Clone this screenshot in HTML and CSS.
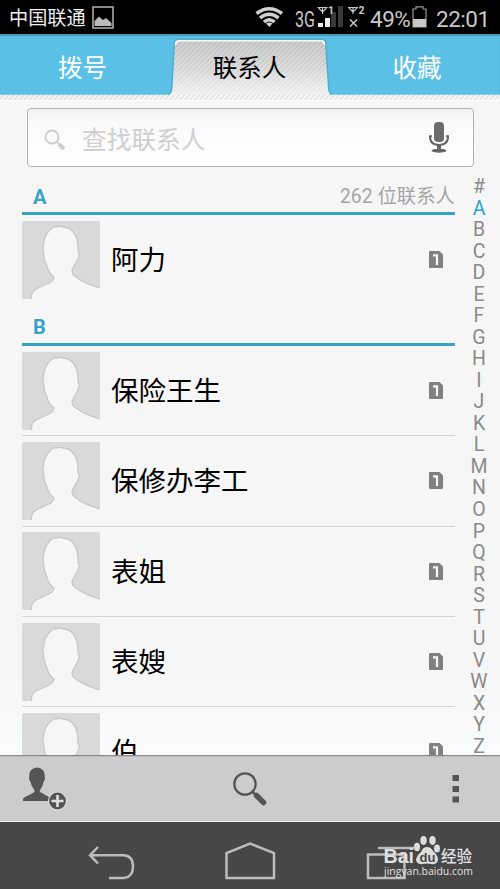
FILE: index.html
```html
<!DOCTYPE html>
<html lang="zh-CN">
<head>
<meta charset="utf-8">
<title>联系人</title>
<link rel="stylesheet" href="styles.css">
</head>
<body>
<svg class="defs" aria-hidden="true">
  <symbol id="person" viewBox="0 0 78 78">
    <rect width="78" height="78" rx="1.500" fill="#d9d9d9"/>
    <path d="M9.500 80V74Q10.500 70 14 68L27 62Q31.500 60 32 56Q26 51 25 45Q21.500 38 21.500 30Q20.500 27 21.500 24Q22 16 26 11Q29 7 33 5.500L34 6.500L36 5L44 6.500Q48 7 51 11Q56 16 56 28V31L57.500 32L56 38Q53 43 50 49Q50 54 54 56Q63 63 80 67.500V80Z" fill="#f6f6f6" stroke="#c8c8c8" stroke-width="1.300"/>
    <path d="M10.200 78H78V67.600" fill="none" stroke="#f6f6f6" stroke-width="1.500"/>
  </symbol>
  <symbol id="sim" viewBox="0 0 14 17">
    <path d="M1 0H10.500L14 3.500V16Q14 17 13 17H1Q0 17 0 16V1Q0 0 1 0Z" fill="#808080"/>
    <path d="M4 4.300H8V14" fill="none" stroke="#f6f6f6" stroke-width="2.200"/>
  </symbol>
</svg>
<div class="phone">
  <header class="status">
    <span class="carrier">中国联通</span>
    <svg class="photo" width="22" height="23" viewBox="0 0 22 23"><rect x="1" y="1" width="20" height="21" fill="none" stroke="#aaa" stroke-width="1.600"/><path d="M2.500 20V15L7 10.500L11 14L14 12L19.500 17V20Z" fill="#bbb"/></svg>
    <svg class="signals" width="114" height="34" viewBox="0 0 114 34">
      <g fill="none" stroke="#d0d0d0" stroke-width="3.500"><path d="M1.500 13.500Q14.300 4 27 13.500"/><path d="M5 18Q14.300 10.500 23.500 18"/><path d="M9 22Q14.300 17.500 19.500 22"/></g><path d="M11 23.500Q14.300 21.500 17.500 23.500L14.300 27Z" fill="#d0d0d0"/>
      <text class="net" x="40" y="27" textLength="20" lengthAdjust="spacingAndGlyphs">3G</text>
      <g fill="none" stroke="#c8c8c8" stroke-width="1.200"><path d="M62.500 7.500H72.500M67.500 7V14M63.500 8L67.500 12L71.500 8"/><path d="M93 7.500H103M98 7V14M94 8L98 12L102 8"/></g>
      <path d="M76 12H81V27H76ZM83 6H88V27H83Z" fill="#393939"/><path d="M63 23H68V27H63ZM70 18H75V27H70Z" fill="#eee"/>
      <text class="simno" x="73" y="14">1</text><text class="simno" x="103.500" y="14">2</text>
      <path d="M95 19.500L102 26.500M102 19.500L95 26.500" stroke="#ccc" stroke-width="1.500"/>
    </svg>
    <span class="percent">49%</span>
    <svg class="battery" width="15" height="22" viewBox="0 0 15 22"><path d="M1 21V3H4V.8H11V3H14V21Z" fill="none" stroke="#999" stroke-width="1.200"/><path d="M1 13H14V21H1Z" fill="#c8c8c8"/></svg>
    <span class="clock">22:01</span>
  </header>
  <nav class="tabs">
    <svg class="tabshape" width="166" height="61" viewBox="0 0 166 61">
      <defs>
        <linearGradient id="tabg" x2="0" y2="1"><stop stop-color="#bfbfbf"/><stop offset=".5" stop-color="#d3d3d3"/><stop offset="1" stop-color="#f1f1f1"/></linearGradient>
        <pattern id="hatch" width="5" height="5" patternUnits="userSpaceOnUse"><path d="M-1 6L6-1M-1 1L1-1M4 6L6 4" stroke="#fff" stroke-opacity=".35" stroke-width="1.200"/></pattern>
        <path id="tabp" d="M1 62Q5 60 5.500 55L8 10Q8 6 12 6H154Q158 6 158 10L161 55Q161 60 165 62Z"/>
      </defs>
      <use href="#tabp" fill="none" opacity=".45" stroke="#3f94b7" stroke-width="3"/>
      <use href="#tabp" fill="url(#tabg)"/><use href="#tabp" fill="url(#hatch)"/>
      <path d="M8.500 11Q8.500 6.700 12 6.700H154Q157.500 6.700 157.500 11" fill="none" stroke="#fff" stroke-width="1.600"/>
    </svg>
    <span class="tab">拨号</span><span class="tab active">联系人</span><span class="tab">收藏</span>
  </nav>
  <div class="strip"></div>
  <main class="content">
    <div class="search">
      <svg width="22" height="22" viewBox="0 0 22 22"><circle cx="8" cy="8" r="6.500" fill="none" stroke="#ccc" stroke-width="1.800"/><path d="M12.500 12.500L15 15" stroke="#ccc" stroke-width="2"/><path d="M15 15L20 20" stroke="#ccc" stroke-width="4"/></svg>
      <span class="hint">查找联系人</span>
      <svg width="20" height="31" viewBox="0 0 20 31"><rect x="5" y="0" width="10" height="20" rx="4" fill="#6b6b6b"/><path d="M1 14V16Q2 23 10 23T19 16V14M0 14.300H3M17 14.300H20M10 23V28" fill="none" stroke="#666" stroke-width="2"/><path d="M8 23H12L12 27H8Z" fill="#666"/><ellipse cx="10" cy="28.700" rx="7.500" ry="2" fill="#666"/></svg>
    </div>
    <div class="body">
      <div class="list">
        <div class="section first"><b>A</b><span>262 位联系人</span></div>
        <div class="row last"><svg class="avatar"><use href="#person"/></svg><span class="name">阿力</span><svg class="sim"><use href="#sim"/></svg></div>
        <div class="section"><b>B</b></div>
        <div class="row"><svg class="avatar"><use href="#person"/></svg><span class="name">保险王生</span><svg class="sim"><use href="#sim"/></svg></div>
        <div class="row"><svg class="avatar"><use href="#person"/></svg><span class="name">保修办李工</span><svg class="sim"><use href="#sim"/></svg></div>
        <div class="row"><svg class="avatar"><use href="#person"/></svg><span class="name">表姐</span><svg class="sim"><use href="#sim"/></svg></div>
        <div class="row"><svg class="avatar"><use href="#person"/></svg><span class="name">表嫂</span><svg class="sim"><use href="#sim"/></svg></div>
        <div class="row"><svg class="avatar"><use href="#person"/></svg><span class="name">伯</span><svg class="sim"><use href="#sim"/></svg></div>
      </div>
      <div class="index"><span>#</span><span class="on">A</span><span>B</span><span>C</span><span>D</span><span>E</span><span>F</span><span>G</span><span>H</span><span>I</span><span>J</span><span>K</span><span>L</span><span>M</span><span>N</span><span>O</span><span>P</span><span>Q</span><span>R</span><span>S</span><span>T</span><span>U</span><span>V</span><span>W</span><span>X</span><span>Y</span><span>Z</span></div>
    </div>
  </main>
  <div class="actions">
    <svg width="44" height="44" viewBox="0 0 44 44"><path d="M0 34V32Q1 30 4 29L10 26Q12 25 11.500 23Q8 19 7.500 15L6 12L6.500 6Q8 1 14 .5Q20 1 21.500 6L22 12L20.500 15Q20 19 17 23Q16 25 19 26L26 30V34Z" fill="#555"/><circle cx="34.500" cy="34" r="9" fill="#555" stroke="#ddd" stroke-width="1.200"/><path d="M28.500 34H40.500M34.500 28V40" stroke="#e0e0e0" stroke-width="2.600"/></svg>
    <svg class="find" width="34" height="34" viewBox="0 0 34 34"><circle cx="12" cy="12" r="10.700" fill="none" stroke="#555" stroke-width="2.300"/><path d="M19.500 20L23 23" stroke="#555" stroke-width="2.500"/><path d="M23.500 23.500L30.500 30.500" stroke="#555" stroke-width="5.500" stroke-linecap="round"/></svg>
    <svg width="8" height="28" viewBox="0 0 8 28"><path d="M.5 0H7V6H.5ZM.5 11H7V17H.5ZM.5 21.500H7V27.500H.5Z" fill="#555"/></svg>
  </div>
  <footer class="nav">
    <svg width="500" height="67" viewBox="0 0 500 67">
      <g fill="none" stroke="#bcbcbc" stroke-width="2.500"><path d="M98 25L90 33.200L98 41.500M90 33.200H124Q133 34 133 44.500T124 56H109"/><path d="M226.500 56V31L250 21.500L274 31V56Z"/><path d="M378 26H414M368 32.500H404.500V56H368Z"/></g>
      <g fill="#e0e0e0">
        <text class="bai" x="383.500" y="41" textLength="30.500" lengthAdjust="spacingAndGlyphs">Bai</text>
        <g fill="#ddd"><ellipse cx="417" cy="25" rx="3" ry="4.200"/><ellipse cx="423.500" cy="18.500" rx="3.200" ry="4.400"/><ellipse cx="432.500" cy="18.500" rx="3.200" ry="4.400"/><ellipse cx="437" cy="26.500" rx="3" ry="4"/><path d="M427 25Q431 25 433 29Q438 33 438 38Q437 43 431 42Q427 41 423 42Q416 43 416 37Q417 33 421 30Q423 25 427 25Z"/></g>
        <text class="du" x="419.500" y="39.500">du</text>
        <text class="jing" x="441" y="39.500">经验</text>
        <text class="site" x="384" y="53" textLength="89" lengthAdjust="spacingAndGlyphs">jingyan.baidu.com</text>
      </g>
    </svg>
  </footer>
</div>
</body>
</html>
```
FILE: styles.css
```css
* { box-sizing: border-box; }
body { margin: 0; font-family: Roboto, "Noto Sans CJK SC", sans-serif; }
svg { display: block; flex: none; }
.defs { position: absolute; width: 0; height: 0; }
.phone { width: 500px; height: 889px; display: flex; flex-direction: column; overflow: hidden; background: #f6f6f6; }

.status { height: 34px; flex: none; background: #000; display: flex; align-items: center; padding-left: 9px; color: #c8c8c8; }
.carrier { width: 83px; color: #eee; font-size: 19.200px; line-height: 34px; padding-top: 3px; white-space: nowrap; }
.photo { margin-top: 1px; }
.signals { margin-left: 141px; }
.net { font: 22px Roboto, sans-serif; fill: #c8c8c8; }
.simno { font: bold 10.500px Roboto, sans-serif; fill: #c8c8c8; }
.percent { width: 43px; font-size: 22.500px; margin: 3px 0 0 1px; white-space: nowrap; letter-spacing: -.5px; }
.battery { margin-left: -1px; }
.clock { font-size: 22.500px; margin: 3px 0 0 9px; letter-spacing: -.5px; }
.percent, .clock { line-height: 28px; }

.tabs { height: 61px; flex: none; display: grid; grid-template-columns: 169px 161px 170px; background: #5bc0e5; border-bottom: 1px solid #83cce8; box-shadow: inset 0 2px 1px #4899bb; position: relative; }
.tabshape { position: absolute; left: 167px; top: 0; }
.tab { position: relative; color: #fff; font-size: 24.500px; line-height: 70px; height: 60px; text-align: center; padding-right: 4px; }
.tab:last-child { padding: 0 0 0 4px; }
.tab.active { color: #000; padding: 0; }
.strip { height: 6px; flex: none; background: repeating-linear-gradient(135deg, #f7f7f7 0 2px, #e2e2e2 2px 3.540px); border-bottom: 1px solid #fff; }

.content { height: 654px; flex: none; overflow: hidden; padding-top: 7px; background: linear-gradient(#f6f6f6 88%, #fafbfc); }
.search { width: 447px; height: 59px; margin: 0 0 8px 27px; display: flex; align-items: center; border: 1.500px solid #b3b3b3; border-radius: 4px; background: linear-gradient(#f1f1f1, #fafafa 25%, #fff); padding: 0 24px 0 16px; }
.search svg:first-child { margin-top: 5px; }
.hint { flex: 1; margin: 6px 0 0 16px; font-size: 24.700px; font-weight: 400; color: #cfcfcf; line-height: 50px; }
.body { display: flex; }
.list { width: 433px; margin-left: 22px; flex: none; }
.section { height: 41px; border-bottom: 3px solid #36a3c5; display: flex; justify-content: space-between; align-items: center; padding: 5px 0 0 11px; font-size: 19px; color: #a5a5a5; line-height: 30px; }
.section.first { height: 40px; padding-top: 7px; }
.section span { font-size: 19.400px; }
.section b { color: #36a3c5; font-size: 20px; }
.row { height: 90.300px; display: flex; align-items: center; border-bottom: 1px solid #d5d5d5; padding-right: 12px; }
.row.last { border-color: transparent; }
.section + .row:not(.last) { height: 90px; }
.avatar { width: 78px; height: 78px; }
.name { flex: 1; margin: 3px 0 0 11px; font-size: 27.500px; color: #000; line-height: 40px; }
.sim { width: 14px; height: 17px; }
.index { width: 32px; margin: 1px 0 0 8px; display: grid; grid-template-rows: repeat(27, 21.540px); height: 581.600px; text-align: center; font-size: 19.500px; font-weight: 400; color: #8a8a8a; line-height: 21.540px; }
.index .on { color: #2ca5cc; }

.actions { height: 67px; flex: none; background: #ccc; border-top: 1px solid #888; border-bottom: 1px solid #eee; display: flex; justify-content: space-between; align-items: center; padding: 0 40px 0 23px; box-shadow: inset 0 1px #bbb; }
.find { margin-right: 20px; }
.nav { height: 67px; flex: none; background: #474747; }
.bai { font: bold 20px "Liberation Sans", sans-serif; }
.du { font: bold 13px "Liberation Sans", sans-serif; fill: #474747; }
.jing { font: 500 15.500px "Noto Sans CJK SC", sans-serif; }
.site { font: 11.500px "Open Sans", sans-serif; }
```
